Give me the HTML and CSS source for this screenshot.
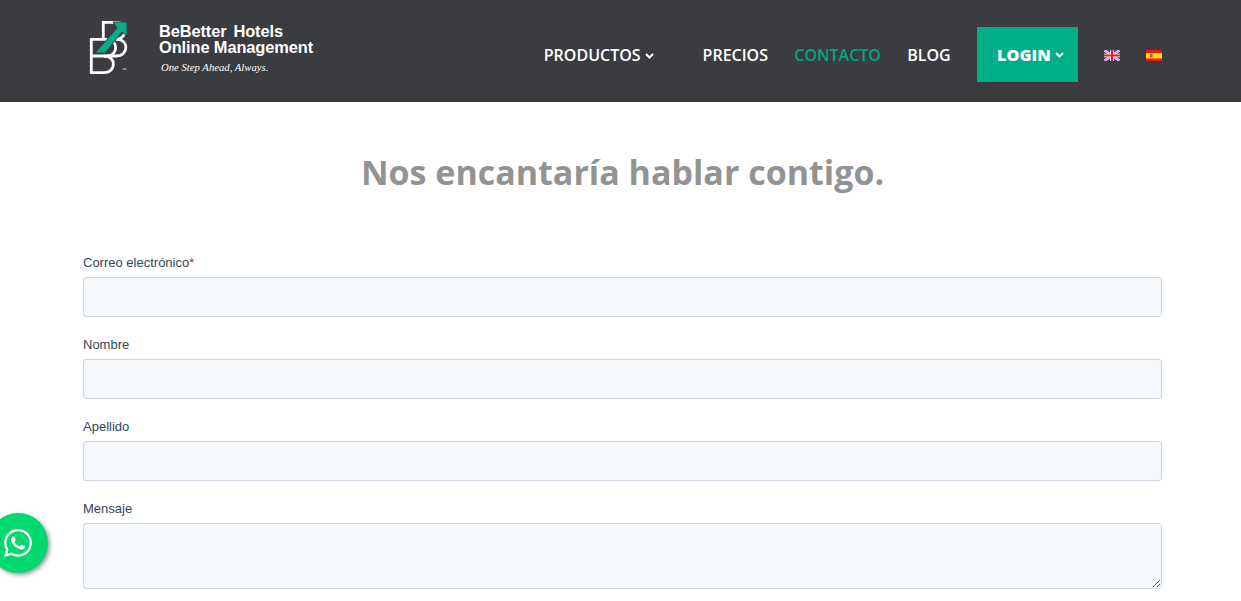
FILE: index.html
```html
<!DOCTYPE html>
<html lang="es">
<head>
<meta charset="utf-8">
<title>Contacto</title>
<link rel="stylesheet" href="styles.css">
</head>
<body>
<header class="site-header">
  <div class="logo">
    <svg class="logo-mark" width="40" height="54" viewBox="0 0 40 54" fill="none">
      <path d="M14.300 17V1.300H28C38.500 1.300 39 17 28 18.300" stroke="#fff" stroke-width="2.800"/>
      <path d="M28 18.300H2.300V51.700H15C27.500 51.700 27.500 35 15 35H2.300" stroke="#fff" stroke-width="2.800"/>
      <path d="M28 18.300C40 18.300 40 35 27 35H15" stroke="#fff" stroke-width="2.800"/>
      <path d="M18 18.300C29.500 18.300 29.500 35 18 35" stroke="#fff" stroke-width="2.800"/>
      <path d="M6 32L28 7L24 1H38V15L33 11L16 32Z" fill="#00ae87" stroke="#3b3c40" stroke-width="1"/>
      <path d="M33.500 48H37.500" stroke="#ccc" stroke-width="1"/>
    </svg>
    <div class="logo-text">
      <div class="logo-name logo-name-first">BeBetter&nbsp; Hotels</div>
      <div class="logo-name">Online Management</div>
      <div class="logo-tag">One Step Ahead, Always.</div>
    </div>
  </div>
  <nav class="nav">
    <a class="nav-link nav-products">PRODUCTOS<svg class="chev" width="9" height="6" viewBox="0 0 9 6"><path d="M1 1l3.500 3.500L8 1" fill="none" stroke="#fff" stroke-width="2"/></svg></a>
    <a class="nav-link">PRECIOS</a>
    <a class="nav-link nav-active">CONTACTO</a>
    <a class="nav-link">BLOG</a>
    <a class="login">LOGIN<svg class="chev" width="9" height="6" viewBox="0 0 9 6"><path d="M1 1l3.500 3.500L8 1" fill="none" stroke="#fff" stroke-width="2"/></svg></a>
    <svg class="flag flag-uk" width="16" height="11" viewBox="0 0 16 11">
      <rect width="16" height="11" fill="#2b3f9a"/>
      <path d="M0 0L16 11M16 0L0 11" stroke="#fff" stroke-width="2.400"/>
      <path d="M0 0L16 11M16 0L0 11" stroke="#d8333f" stroke-width="0.800"/>
      <path d="M8 0V11M0 5.500H16" stroke="#fff" stroke-width="3.600"/>
      <path d="M8 0V11M0 5.500H16" stroke="#d8202f" stroke-width="2"/>
    </svg>
    <svg class="flag flag-es" width="16" height="11" viewBox="0 0 16 11">
      <rect width="16" height="11" fill="#f0141e"/>
      <rect y="3" width="16" height="5.500" fill="#f8e000"/>
      <rect x="4" y="4" width="2.500" height="3.500" fill="#c8502a"/>
    </svg>
  </nav>
</header>
<main class="content">
  <h1 class="title">Nos encantaría hablar contigo.</h1>
  <form class="form">
    <div class="field">
      <label class="label">Correo electrónico<span class="req">*</span></label>
      <input class="input" type="text">
    </div>
    <div class="field">
      <label class="label">Nombre</label>
      <input class="input" type="text">
    </div>
    <div class="field">
      <label class="label">Apellido</label>
      <input class="input" type="text">
    </div>
    <div class="field">
      <label class="label">Mensaje</label>
      <textarea class="input textarea"></textarea>
    </div>
  </form>
</main>
<a class="whatsapp">
  <svg width="28" height="28" viewBox="0 0 24 24"><path fill="#fff" d="M17.472 14.382c-.297-.149-1.758-.867-2.030-.967-.273-.099-.471-.148-.670.150-.197.297-.767.966-.940 1.164-.173.199-.347.223-.644.075-.297-.150-1.255-.463-2.390-1.475-.883-.788-1.480-1.761-1.653-2.059-.173-.297-.018-.458.130-.606.134-.133.298-.347.446-.520.149-.174.198-.298.298-.497.099-.198.050-.371-.025-.520-.075-.149-.669-1.612-.916-2.207-.242-.579-.487-.500-.669-.510-.173-.008-.371-.010-.570-.010-.198 0-.520.074-.792.372-.272.297-1.040 1.016-1.040 2.479 0 1.462 1.065 2.875 1.213 3.074.149.198 2.096 3.200 5.077 4.487.709.306 1.262.489 1.694.625.712.227 1.360.195 1.871.118.571-.085 1.758-.719 2.006-1.413.248-.694.248-1.289.173-1.413-.074-.124-.272-.198-.570-.347m-5.421 7.403h-.004a9.870 9.870 0 01-5.031-1.378l-.361-.214-3.741.982.998-3.648-.235-.374a9.860 9.860 0 01-1.510-5.260c.001-5.450 4.436-9.884 9.888-9.884 2.640 0 5.122 1.030 6.988 2.898a9.825 9.825 0 012.893 6.994c-.003 5.450-4.437 9.884-9.885 9.884m8.413-18.297A11.815 11.815 0 0012.050 0C5.495 0 .160 5.335.157 11.892c0 2.096.547 4.142 1.588 5.945L.057 24l6.305-1.654a11.882 11.882 0 005.683 1.448h.005c6.554 0 11.890-5.335 11.893-11.893a11.821 11.821 0 00-3.480-8.413z"/></svg>
</a>
</body>
</html>
```

FILE: styles.css
```css
* { box-sizing: border-box; }
html, body { margin: 0; padding: 0; background: #fff; }
body { font-family: "Liberation Sans", Arial, sans-serif; height: 601px; overflow: hidden; }

.site-header {
  height: 102px;
  background: #3b3c40;
  display: flex;
  align-items: flex-start;
  justify-content: space-between;
  padding: 0 79px 0 89px;
}
.logo { display: flex; align-items: flex-start; gap: 30px; margin-top: 21px; }
.logo-mark { display: block; }
.logo-text { color: #fff; margin-top: 2px; }
.logo-name { font-weight: 700; font-size: 16.400px; line-height: 16px; letter-spacing: -0.100px; }
.logo-name-first { word-spacing: -1px; }
.logo-tag { font-family: "Liberation Serif", serif; font-style: italic; font-size: 10.700px; line-height: 14px; margin: 5px 0 0 2px; }

.nav { display: flex; align-items: center; margin-top: 27px; }
.nav-link { color: #fff; font-family: "Open Sans", sans-serif; font-weight: 600; font-size: 16px; margin-right: 26.300px; white-space: nowrap; }
.nav-products { margin-right: 49px; }
.nav-active { color: #00a582; }
.chev { margin-left: 4px; vertical-align: 2px; }
.login {
  background: #00ae87;
  color: #fff;
  font-family: "Open Sans", sans-serif;
  font-weight: 800;
  font-size: 16.300px;
  width: 101px;
  height: 55px;
  display: flex;
  align-items: center;
  padding: 1px 0 0 20px;
  margin-right: 26px;
}
.login .chev { margin-left: 4px; }
.flag { display: block; margin-top: 1px; }
.flag-uk { margin-right: 26px; }

.content { padding: 0 79px 0 83px; }
.title {
  margin: 47px 0 0;
  text-align: center;
  font-family: "Open Sans", sans-serif;
  font-weight: 700;
  font-size: 34px;
  line-height: 46px;
  color: #939393;
}
.form { margin-top: 57px; display: flex; flex-direction: column; gap: 17px; }
.field { display: flex; flex-direction: column; }
.label { font-size: 13px; line-height: 20px; padding-top: 1px; height: 20px; color: #33475b; margin-bottom: 5px; }
.req { color: #ff0000; }
.input {
  display: block;
  width: 100%;
  height: 40px;
  background: #f5f8fa;
  border: 1px solid #cbd6e2;
  border-radius: 3px;
  padding: 0;
  outline: none;
}
.textarea { height: 66px; }

.whatsapp {
  position: fixed;
  left: -12px;
  top: 513px;
  width: 60px;
  height: 60px;
  border-radius: 50%;
  background: #00d96f;
  box-shadow: 2px 2px 4px rgba(0, 0, 0, 0.4);
  display: flex;
  align-items: center;
  justify-content: center;
}
```
